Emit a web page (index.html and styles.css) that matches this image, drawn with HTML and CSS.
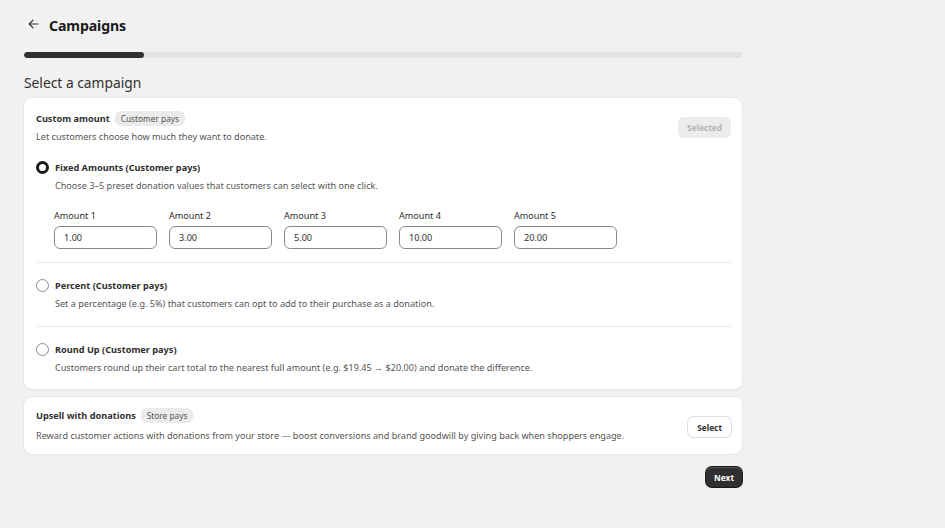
FILE: index.html
```html
<!DOCTYPE html>
<html>
<head>
<meta charset="utf-8">
<link rel="stylesheet" href="styles.css">
</head>
<body>
<div class="page">
  <header class="header">
    <svg class="back" width="11" height="10" viewBox="0 0 11 10"><path d="M10 5H1.5M5 1.2L1.2 5 5 8.8" fill="none" stroke="#303030" stroke-width="1.1" stroke-linecap="round" stroke-linejoin="round"/></svg>
    <h1>Campaigns</h1>
  </header>
  <div class="progress"><div class="progress-fill" style="width:16.7%"></div></div>
  <h2 class="section-title">Select a campaign</h2>

  <section class="card">
    <div class="card-head">
      <div class="card-head-text">
        <div class="title-row"><span class="card-title">Custom amount</span><span class="badge">Customer pays</span></div>
        <p class="muted">Let customers choose how much they want to donate.</p>
      </div>
      <button class="btn btn-disabled">Selected</button>
    </div>

    <div class="option">
      <div class="option-row"><span class="radio radio-on"></span><span class="option-title">Fixed Amounts (Customer pays)</span></div>
      <p class="muted option-desc">Choose 3–5 preset donation values that customers can select with one click.</p>
      <div class="amounts">
        <label class="field"><span class="field-label">Amount 1</span><span class="input">1.00</span></label>
        <label class="field"><span class="field-label">Amount 2</span><span class="input">3.00</span></label>
        <label class="field"><span class="field-label">Amount 3</span><span class="input">5.00</span></label>
        <label class="field"><span class="field-label">Amount 4</span><span class="input">10.00</span></label>
        <label class="field"><span class="field-label">Amount 5</span><span class="input">20.00</span></label>
      </div>
    </div>
    <div class="option option-border">
      <div class="option-row"><span class="radio"></span><span class="option-title">Percent (Customer pays)</span></div>
      <p class="muted option-desc">Set a percentage (e.g. 5%) that customers can opt to add to their purchase as a donation.</p>
    </div>
    <div class="option option-border option-last">
      <div class="option-row"><span class="radio"></span><span class="option-title">Round Up (Customer pays)</span></div>
      <p class="muted option-desc">Customers round up their cart total to the nearest full amount (e.g. $19.45 → $20.00) and donate the difference.</p>
    </div>
  </section>

  <section class="card card-small">
    <div class="card-head card-head-center">
      <div class="card-head-text">
        <div class="title-row"><span class="card-title">Upsell with donations</span><span class="badge">Store pays</span></div>
        <p class="muted muted-spaced">Reward customer actions with donations from your store — boost conversions and brand goodwill by giving back when shoppers engage.</p>
      </div>
      <button class="btn btn-secondary">Select</button>
    </div>
  </section>

  <div class="footer"><button class="btn btn-primary">Next</button></div>
</div>
</body>
</html>
```
FILE: styles.css
```css
* { box-sizing: border-box; }
html, body { margin: 0; padding: 0; }
body {
  background: #f1f1f1;
  font-family: "Noto Sans", "Open Sans", sans-serif;
  color: #303030;
  width: 945px;
  height: 528px;
  overflow: hidden;
}
p { margin: 0; }
.page {
  width: 718px;
  margin-left: 24px;
  padding-top: 14px;
}
.header {
  display: flex;
  align-items: center;
  gap: 10px;
  height: 22px;
  padding-left: 4px;
}
.back { margin-top: -3px; }
h1 {
  margin: 0;
  font-size: 14.1px;
  font-weight: 700;
  color: #1a1a1a;
  letter-spacing: -0.1px;
}
.progress {
  margin-top: 16px;
  height: 6px;
  border-radius: 3px;
  background: #e3e3e3;
  overflow: hidden;
}
.progress-fill { height: 100%; background: #303030; border-radius: 3px; }
.section-title {
  margin: 15px 0 0;
  font-size: 13.8px;
  font-weight: 400;
  color: #303030;
  line-height: 20px;
}
.card {
  margin-top: 5px;
  background: #fff;
  border-radius: 8px;
  box-shadow: 0 0 0 1px #e6e6e6, 0 1px 0 #d8d8d8;
  padding: 12px 11px 15px 12px;
}
.card-small { margin-top: 8px; padding: 10px 11px 12px 12px; }
.card-head {
  display: flex;
  justify-content: space-between;
  align-items: flex-start;
}
.card-head-center { align-items: center; }
.title-row { display: flex; align-items: center; gap: 5px; height: 17px; }
.card-title { font-size: 9.2px; font-weight: 700; color: #303030; }
.badge {
  font-size: 8.3px;
  background: #ebebeb;
  color: #555;
  padding: 2px 6px;
  border-radius: 6px;
  line-height: 11px;
}
.muted { font-size: 9.1px; color: #555; line-height: 13px; margin-top: 3px; }
.muted-spaced { margin-top: 5px; }
.btn {
  font-family: inherit;
  font-size: 8.3px;
  font-weight: 700;
  border-radius: 6px;
  border: 0;
  height: 21px;
  padding: 0 9px;
}
.btn-disabled { background: #ececec; color: #b5b5b5; margin-top: 7px; }
.btn-secondary { background: #fff; color: #303030; box-shadow: 0 0 0 1px #dedede, 0 1px 0 #c9c9c9; height: 20px; margin-top: 5px; }
.btn-primary { background: #303030; color: #fff; box-shadow: 0 0 0 1px #1a1a1a, inset 0 1px 0 #555; height: 20px; padding: 0 8px; }
.option { padding: 17px 0 13px; }
.option-border { border-top: 1px solid #ebebeb; padding-top: 15px; padding-bottom: 16px; }
.option-last { padding-bottom: 0; }
.option-row { display: flex; align-items: center; gap: 6px; height: 14px; }
.radio {
  width: 13px; height: 13px; border-radius: 50%;
  border: 1px solid #8a8a8a;
  background: #fff;
  flex: none;
}
.radio-on { border: 3.5px solid #1a1a1a; }
.option-title { font-size: 9.2px; font-weight: 700; color: #303030; }
.option-desc { margin-left: 19px; margin-top: 5px; }
.amounts {
  display: flex;
  gap: 12px;
  margin-left: 18px;
  margin-top: 18px;
}
.field { display: flex; flex-direction: column; gap: 4px; }
.field-label { font-size: 9.1px; color: #303030; line-height: 12px; }
.input {
  width: 103px; height: 23px;
  border: 1px solid #8a8a8a;
  border-radius: 6px;
  font-size: 9.1px;
  padding: 0 9px;
  display: flex; align-items: center;
  color: #303030;
}
.footer { display: flex; justify-content: flex-end; margin-top: 13px; }
```
